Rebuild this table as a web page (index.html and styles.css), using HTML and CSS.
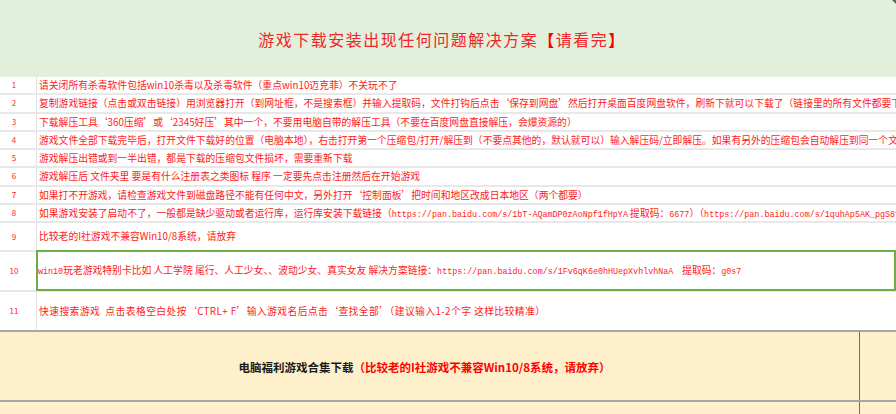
FILE: index.html
```html
<!DOCTYPE html>
<html lang="zh-CN">
<head>
<meta charset="utf-8">
<title>游戏下载安装出现任何问题解决方案</title>
<link rel="stylesheet" href="styles.css">
</head>
<body>
<div class="sheet">
  <div class="header"><h1 class="title">游戏下载安装出现任何问题解决方案<span class="br">【</span>请看完<span class="br">】</span></h1></div>

  <div class="row r-s"><div class="num">1</div><div class="txt">请关闭所有杀毒软件包括win10杀毒以及杀毒软件（重点win10迈克菲）不关玩不了</div></div>
  <div class="row r-s"><div class="num">2</div><div class="txt">复制游戏链接（点击或双击链接）用浏览器打开（到网址框，不是搜索框）并输入提取码，文件打钩后点击‘保存到网盘’然后打开桌面百度网盘软件，刷新下就可以下载了（链接里的所有文件都要下载）</div></div>
  <div class="row r-s"><div class="num">3</div><div class="txt">下载解压工具‘360压缩’或‘2345好压’其中一个，不要用电脑自带的解压工具（不要在百度网盘直接解压，会爆资源的）</div></div>
  <div class="row r-s"><div class="num">4</div><div class="txt">游戏文件全部下载完毕后，打开文件下载好的位置（电脑本地），右击打开第一个压缩包/打开/解压到（不要点其他的，默认就可以）输入解压码/立即解压。如果有另外的压缩包会自动解压到同一个文件夹</div></div>
  <div class="row r-s"><div class="num">5</div><div class="txt">游戏解压出错或到一半出错，都是下载的压缩包文件损坏，需要重新下载</div></div>
  <div class="row r-s"><div class="num">6</div><div class="txt">游戏解压后 文件夹里 要是有什么注册表之类图标 程序 一定要先点击注册然后在开始游戏</div></div>
  <div class="row r-s"><div class="num">7</div><div class="txt">如果打不开游戏，请检查游戏文件到磁盘路径不能有任何中文，另外打开‘控制面板’把时间和地区改成日本地区（两个都要）</div></div>
  <div class="row r-s"><div class="num">8</div><div class="txt">如果游戏安装了启动不了，一般都是缺少驱动或者运行库，运行库安装下载链接（<span class="mono">https://pan.baidu.com/s/1bT-AQamDP0zAoNpf1fHpYA</span> 提取码：<span class="mono">6677</span>）（<span class="mono">https://pan.baidu.com/s/1quhAp5AK_pgS8fMxYz</span>）</div></div>
  <div class="row r-9"><div class="num">9</div><div class="txt">比较老的I社游戏不兼容Win10/8系统，请放弃</div></div>
  <div class="row r-10"><div class="num">10</div><div class="txt sel"><span class="mono">win10</span>玩老游戏特别卡比如 人工学院 尾行、人工少女、、波动少女、真实女友 解决方案链接：<span class="mono">https://pan.baidu.com/s/1Fv6qK6e0hHUepXvhlvhNaA</span>&nbsp;&nbsp;&nbsp;&nbsp;提取码：<span class="mono">g0s7</span></div></div>
  <div class="row r-11"><div class="num">11</div><div class="txt wide">快速搜索游戏&nbsp;&nbsp;点击表格空白处按‘CTRL+ F’输入游戏名后点击‘查找全部’（建议输入1-2个字 这样比较精准）</div></div>

  <div class="band">
    <div class="band-main"><span class="band-black">电脑福利游戏合集下载</span><span class="band-red">（比较老的I社游戏不兼容Win10/8系统，请放弃）</span></div>
    <div class="band-side"></div>
  </div>
  <div class="band band-low">
    <div class="band-main"></div>
    <div class="band-side"></div>
  </div>
  <div class="corner"></div>
</div>
</body>
</html>
```
FILE: styles.css
```css
* { box-sizing: border-box; margin: 0; padding: 0; }
html, body { width: 896px; height: 414px; overflow: hidden; background: #ffffff; }
body { font-family: "Noto Sans CJK SC", "Noto Sans", sans-serif; }

.sheet { position: relative; width: 896px; height: 414px; overflow: hidden; display: flex; flex-direction: column; }

.header {
  height: 77px;
  background: #e2efda;
  display: flex;
  align-items: center;
  justify-content: center;
  padding-right: 12px;
  flex: none;
}
.title {
  font-weight: 400;
  font-size: 16px;
  letter-spacing: 1.5px;
  color: #f0262a;
  line-height: 1;
  margin-top: 1px;
}
.title .br { color: #ff0000; font-weight: 700; }

.row {
  display: flex;
  flex: none;
  border-bottom: 2px solid #e8e8e8;
  color: #ff1a1a;
}
.r-s { height: 18.25px; line-height: 16.25px; }
.r-9 { height: 29px; line-height: 27px; }
.r-10 { height: 40px; line-height: 37px; }
.r-11 { height: 40px; line-height: 38px; border-bottom: 2px solid #a6a6a6; }

.num {
  width: 37px;
  flex: none;
  border-right: 1px solid #e2e2e2;
  font-size: 8px;
  text-align: center;
  padding-right: 8px;
}
.txt {
  flex: 1;
  min-width: 0;
  font-size: 9.8px;
  white-space: nowrap;
  overflow: hidden;
  padding-left: 2px;
}
.wide { letter-spacing: 0.4px; }
.mono { font-family: "Liberation Mono", "DejaVu Sans Mono", monospace; font-size: 8.4px; letter-spacing: 0; }

.sel {
  border: 2px solid #70ad47;
  margin-top: -2px;
  margin-bottom: -1px;
  padding-left: 0;
  margin-left: -1px;
}

.band {
  height: 68px;
  background: #fdf0cb;
  display: flex;
  flex: none;
}
.band-main {
  width: 859px;
  flex: none;
  display: flex;
  align-items: center;
  justify-content: center;
  font-size: 11.5px;
  font-weight: 700;
  padding-top: 2px;
  padding-right: 10px;
}
.band-black { color: #1a1a1a; }
.band-red { color: #ff0000; }
.band-side { flex: 1; border-left: 1px solid #6b6b6b; }
.band-low { height: 14px; border-top: 2px solid #a6a6a6; flex: 1; }

.corner {
  position: absolute;
  top: 0;
  right: 0;
  width: 0;
  height: 0;
  border-top: 4px solid #5a6a5a;
  border-left: 4px solid transparent;
}
```
